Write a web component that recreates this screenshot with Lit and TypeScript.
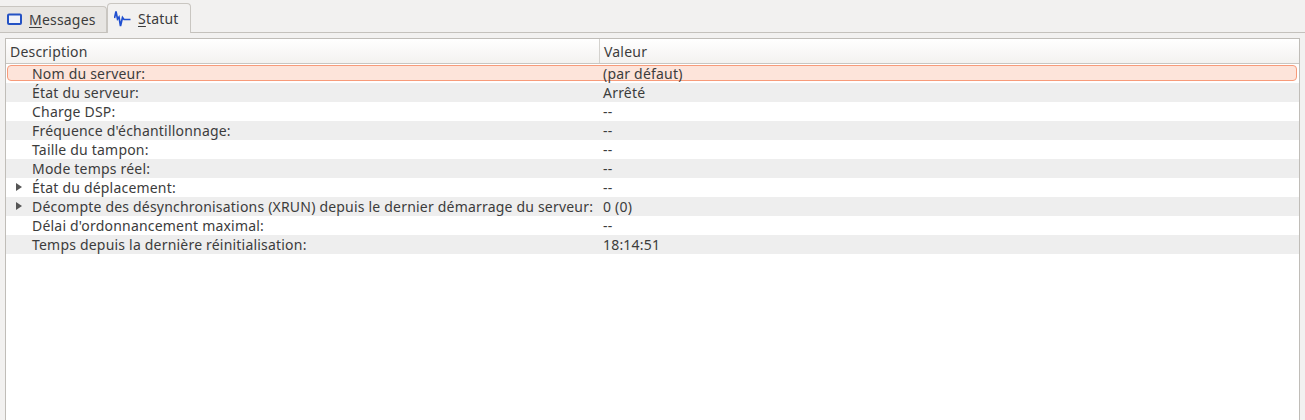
import { LitElement, html, css, svg } from "lit";
import { customElement } from "lit/decorators.js";

const rows: [string, string, boolean?][] = [
  ["Nom du serveur:", "(par défaut)"],
  ["État du serveur:", "Arrêté"],
  ["Charge DSP:", "--"],
  ["Fréquence d'échantillonnage:", "--"],
  ["Taille du tampon:", "--"],
  ["Mode temps réel:", "--"],
  ["État du déplacement:", "--", true],
  ["Décompte des désynchronisations (XRUN) depuis le dernier démarrage du serveur:", "0 (0)", true],
  ["Délai d'ordonnancement maximal:", "--"],
  ["Temps depuis la dernière réinitialisation:", "18:14:51"],
];

@customElement("app-root")
export class AppRoot extends LitElement {
  static styles = css`
    :host {
      display: block;
      width: 1305px;
      height: 420px;
      overflow: hidden;
      background: #f2f1f0;
      font-family: "Noto Sans", sans-serif;
      font-size: 14px;
      letter-spacing: 0.2px;
      color: #3c3c3c;
    }
    .tabs {
      display: flex;
      align-items: flex-end;
      height: 32px;
      box-sizing: border-box;
    }
    .tab {
      display: flex;
      align-items: center;
      box-sizing: border-box;
      border: 1px solid #c9c6c1;
      border-bottom: none;
      border-radius: 4px 4px 0 0;
    }
    .tab u { text-decoration-thickness: 1px; text-underline-offset: 2px; }
    .off {
      width: 107px;
      height: 26px;
      background: #e7e5e2;
      border-left: none;
      border-radius: 0 4px 0 0;
      padding-left: 6px;
      gap: 7px;
    }
    .on {
      width: 84px;
      height: 30px;
      margin-bottom: -1px;
      position: relative;
      background: #f2f1f0;
      padding-left: 6px;
      gap: 6px;
    }
    .pane {
      border-top: 1px solid #c4c1bc;
      padding: 5px 5px 0 5px;
      height: 388px;
    }
    .view {
      border: 1px solid #c0bdb8;
      border-bottom: none;
      background: #fff;
      height: 388px;
      box-sizing: border-box;
    }
    .head {
      display: flex;
      height: 24px;
      align-items: center;
      background: linear-gradient(#ffffff, #f3f2f0);
      border-bottom: 1px solid #c9c6c1;
    }
    .hc { padding-left: 4px; box-sizing: border-box; height: 100%; display: flex; align-items: center; }
    .hc.a { width: 594px; border-right: 1px solid #d4d2ce; }
    .hc.b { flex: 1; }
    .row {
      display: flex;
      height: 19px;
      line-height: 19px;
      align-items: flex-start;
      position: relative;
    }
    .row.alt { background: #eeeeee; }
    .sel::before {
      content: "";
      position: absolute;
      left: 1px;
      right: 2px;
      top: 1px;
      height: 14px;
      background: #fde4da;
      border: 1px solid #f79b7a;
      border-radius: 4px;
    }
    .c1 { position: relative; width: 594px; padding-left: 26px; box-sizing: border-box; white-space: nowrap; display: block; }
    .c2 { position: relative; padding-left: 3px; white-space: nowrap; }
    .arrow {
      position: absolute;
      left: 10px;
      top: 5px;
      width: 0;
      height: 0;
      border-left: 6px solid #555;
      border-top: 4px solid transparent;
      border-bottom: 4px solid transparent;
    }
  `;

  render() {
    return html`
      <div class="tabs">
        <div class="tab off">
          <svg width="16" height="16" viewBox="0 0 16 16">
            <rect x="2" y="2.5" width="13" height="9.5" rx="1" fill="#f1f3f9" stroke="#2452c4" stroke-width="2"></rect>
          </svg>
          <span><u>M</u>essages</span>
        </div>
        <div class="tab on">
          <svg width="18" height="18" viewBox="0 0 18 18">
            ${svg`<path d="M0.5 8L2 1.5L3.5 9L5 7L6.5 16L8.5 7.5L10 9.5H16.5" fill="none" stroke="#1f4fd0" stroke-width="1.7"></path>`}
          </svg>
          <span><u>S</u>tatut</span>
        </div>
      </div>
      <div class="pane">
        <div class="view">
          <div class="head">
            <div class="hc a">Description</div>
            <div class="hc b">Valeur</div>
          </div>
          ${rows.map(
            ([k, v, exp], i) => html`
              <div class="row ${i === 0 ? "sel" : i % 2 ? "alt" : ""}">
                ${exp ? html`<span class="arrow"></span>` : ""}
                <span class="c1">${k}</span>
                <span class="c2">${v}</span>
              </div>
            `
          )}
        </div>
      </div>
    `;
  }
}
